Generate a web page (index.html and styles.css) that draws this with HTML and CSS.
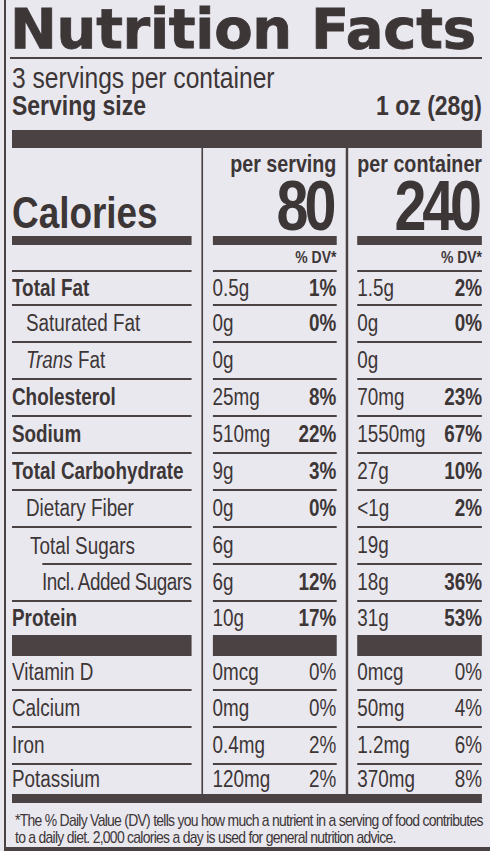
FILE: index.html
```html
<!DOCTYPE html>
<html lang="en">

<head>
    <meta charset="UTF-8">
    <meta name="viewport" content="width=device-width, initial-scale=1.0">
    <title>Nutrition Facts</title>
    <link rel="stylesheet" href="styles.css">
</head>

<body>
    <div class="label">
        <!-- Header -->
        <h1 class="title">Nutrition Facts</h1>

        <!-- everything below the title is set in a condensed face -->
        <div class="narrow">
            <div class="servings">3 servings per container</div>
            <div class="serving-size">
                <span>Serving size</span>
                <span>1 oz (28g)</span>
            </div>
            <div class="thick-bar"></div>

            <!-- Facts table -->
            <div class="facts">
                <div class="divider first"></div>
                <div class="divider second"></div>

                <div class="cell head"><span class="calories">Calories</span></div>
                <div class="cell head amount">
                    <span class="per">per serving</span>
                    <span class="big">80</span>
                </div>
                <div class="cell head amount">
                    <span class="per">per container</span>
                    <span class="big">240</span>
                </div>

                <div class="cell dv"></div>
                <div class="cell dv">% DV*</div>
                <div class="cell dv">% DV*</div>

                <div class="cell name bold">Total Fat</div>
                <div class="cell val"><span>0.5g</span><b>1%</b></div>
                <div class="cell val"><span>1.5g</span><b>2%</b></div>

                <div class="cell name indent">Saturated Fat</div>
                <div class="cell val"><span>0g</span><b>0%</b></div>
                <div class="cell val"><span>0g</span><b>0%</b></div>

                <div class="cell name indent"><i>Trans</i>&nbsp;Fat</div>
                <div class="cell val"><span>0g</span></div>
                <div class="cell val"><span>0g</span></div>

                <div class="cell name bold">Cholesterol</div>
                <div class="cell val"><span>25mg</span><b>8%</b></div>
                <div class="cell val"><span>70mg</span><b>23%</b></div>

                <div class="cell name bold">Sodium</div>
                <div class="cell val"><span>510mg</span><b>22%</b></div>
                <div class="cell val"><span>1550mg</span><b>67%</b></div>

                <div class="cell name bold">Total Carbohydrate</div>
                <div class="cell val"><span>9g</span><b>3%</b></div>
                <div class="cell val"><span>27g</span><b>10%</b></div>

                <div class="cell name indent">Dietary Fiber</div>
                <div class="cell val"><span>0g</span><b>0%</b></div>
                <div class="cell val"><span>&lt;1g</span><b>2%</b></div>

                <div class="cell name indent-2 sugars">Total Sugars</div>
                <div class="cell val"><span>6g</span></div>
                <div class="cell val"><span>19g</span></div>

                <div class="cell name indent-3 added">Incl. Added Sugars</div>
                <div class="cell val"><span>6g</span><b>12%</b></div>
                <div class="cell val"><span>18g</span><b>36%</b></div>

                <div class="cell name bold heavy">Protein</div>
                <div class="cell val heavy"><span>10g</span><b>17%</b></div>
                <div class="cell val heavy"><span>31g</span><b>53%</b></div>

                <div class="cell name">Vitamin D</div>
                <div class="cell val"><span>0mcg</span><span>0%</span></div>
                <div class="cell val"><span>0mcg</span><span>0%</span></div>

                <div class="cell name">Calcium</div>
                <div class="cell val"><span>0mg</span><span>0%</span></div>
                <div class="cell val"><span>50mg</span><span>4%</span></div>

                <div class="cell name">Iron</div>
                <div class="cell val"><span>0.4mg</span><span>2%</span></div>
                <div class="cell val"><span>1.2mg</span><span>6%</span></div>

                <div class="cell name last">Potassium</div>
                <div class="cell val last"><span>120mg</span><span>2%</span></div>
                <div class="cell val last"><span>370mg</span><span>8%</span></div>
            </div>

            <div class="bottom-bar"></div>
            <p class="footnote">*The % Daily Value (DV) tells you how much a nutrient in a serving of food contributes<br>to a daily diet. 2,000 calories a day is used for general nutrition advice.</p>
        </div>
    </div>
</body>

</html>
```

FILE: styles.css
```css
body {
    margin: 0;
    background-color: #e9e8ef;
    color: #3d3637;
    font-family: "Liberation Sans", Arial, sans-serif;
}

.label {
    height: 851px;
    box-sizing: border-box;
    margin-left: 4px;
    padding: 0 8px 0 6px;
    border-left: 2px solid #4a4243;
    border-bottom: 4px solid #4a4243;
    overflow: hidden;
}

/* Header */
.title {
    margin: 0 0 0 -2px;
    font-family: "DejaVu Sans", sans-serif;
    font-weight: bold;
    font-size: 56px;
    line-height: 57px;
    letter-spacing: -0.3px;
    -webkit-text-stroke: 0.8px #3d3637;
    border-bottom: 2px solid #4a4243;
}

/* No narrow face is installed, so squeeze Liberation Sans to Arial Narrow proportions.
   Widths inside are written at 1/0.82 of what shows on screen. */
.narrow {
    width: 573.2px;
    transform: scaleX(0.82);
    transform-origin: 0 0;
}

.servings {
    margin-top: 5px;
    font-size: 30px;
    line-height: 28px;
}

.serving-size {
    display: flex;
    justify-content: space-between;
    font-weight: bold;
    font-size: 28px;
    line-height: 28px;
}

.thick-bar {
    height: 18px;
    margin-top: 10px;
    background-color: #4a4243;
}

/* Facts table */
.facts {
    display: grid;
    grid-template-columns: 180fr 21fr 124fr 21fr 124fr;
    grid-template-rows: 97px 27px 34px repeat(8, 37px) 54px 35px 37px 37px 29px;
}

.divider {
    grid-row: 1 / -1;
    width: 2.4px;
    justify-self: center;
    background-color: #4a4243;
}

.divider.first {
    grid-column: 2;
}

.divider.second {
    grid-column: 4;
}

.cell {
    display: flex;
    align-items: center;
    box-sizing: border-box;
    border-bottom: 2px solid #4a4243;
    font-size: 23px;
    line-height: 23px;
    white-space: nowrap;
}

.cell.head {
    border-bottom-width: 9px;
    align-items: flex-end;
}

.calories {
    font-weight: bold;
    font-size: 45px;
    line-height: 46px;
}

.cell.amount {
    flex-direction: column;
    justify-content: flex-end;
    align-items: flex-end;
}

.per {
    font-weight: bold;
    font-size: 24px;
    line-height: 24px;
}

.big {
    font-weight: bold;
    font-size: 70px;
    line-height: 60px;
    letter-spacing: -5px;
    margin-right: 5px;
}

.cell.dv {
    justify-content: flex-end;
    align-items: flex-end;
    padding-bottom: 4px;
    font-weight: bold;
    font-size: 17px;
    line-height: 17px;
}

.bold {
    font-weight: bold;
}

.indent {
    padding-left: 17px;
}

.indent-2 {
    padding-left: 22px;
}

.indent-3 {
    padding-left: 36.6px;
}

.added {
    letter-spacing: -0.6px;
}

/* the rule under Total Sugars starts at the added sugars indent */
.sugars {
    border-bottom: none;
    background-image: linear-gradient(#4a4243, #4a4243);
    background-size: calc(100% - 36.6px) 2px;
    background-position: right bottom;
    background-repeat: no-repeat;
}

.val {
    justify-content: space-between;
}

.heavy {
    border-bottom-width: 21px;
}

.last {
    border-bottom: none;
}

.bottom-bar {
    height: 9px;
    background-color: #4a4243;
}

.footnote {
    margin: 9px 0 0 3.7px;
    font-size: 17px;
    line-height: 17px;
    letter-spacing: -0.88px;
    white-space: nowrap;
}
```
